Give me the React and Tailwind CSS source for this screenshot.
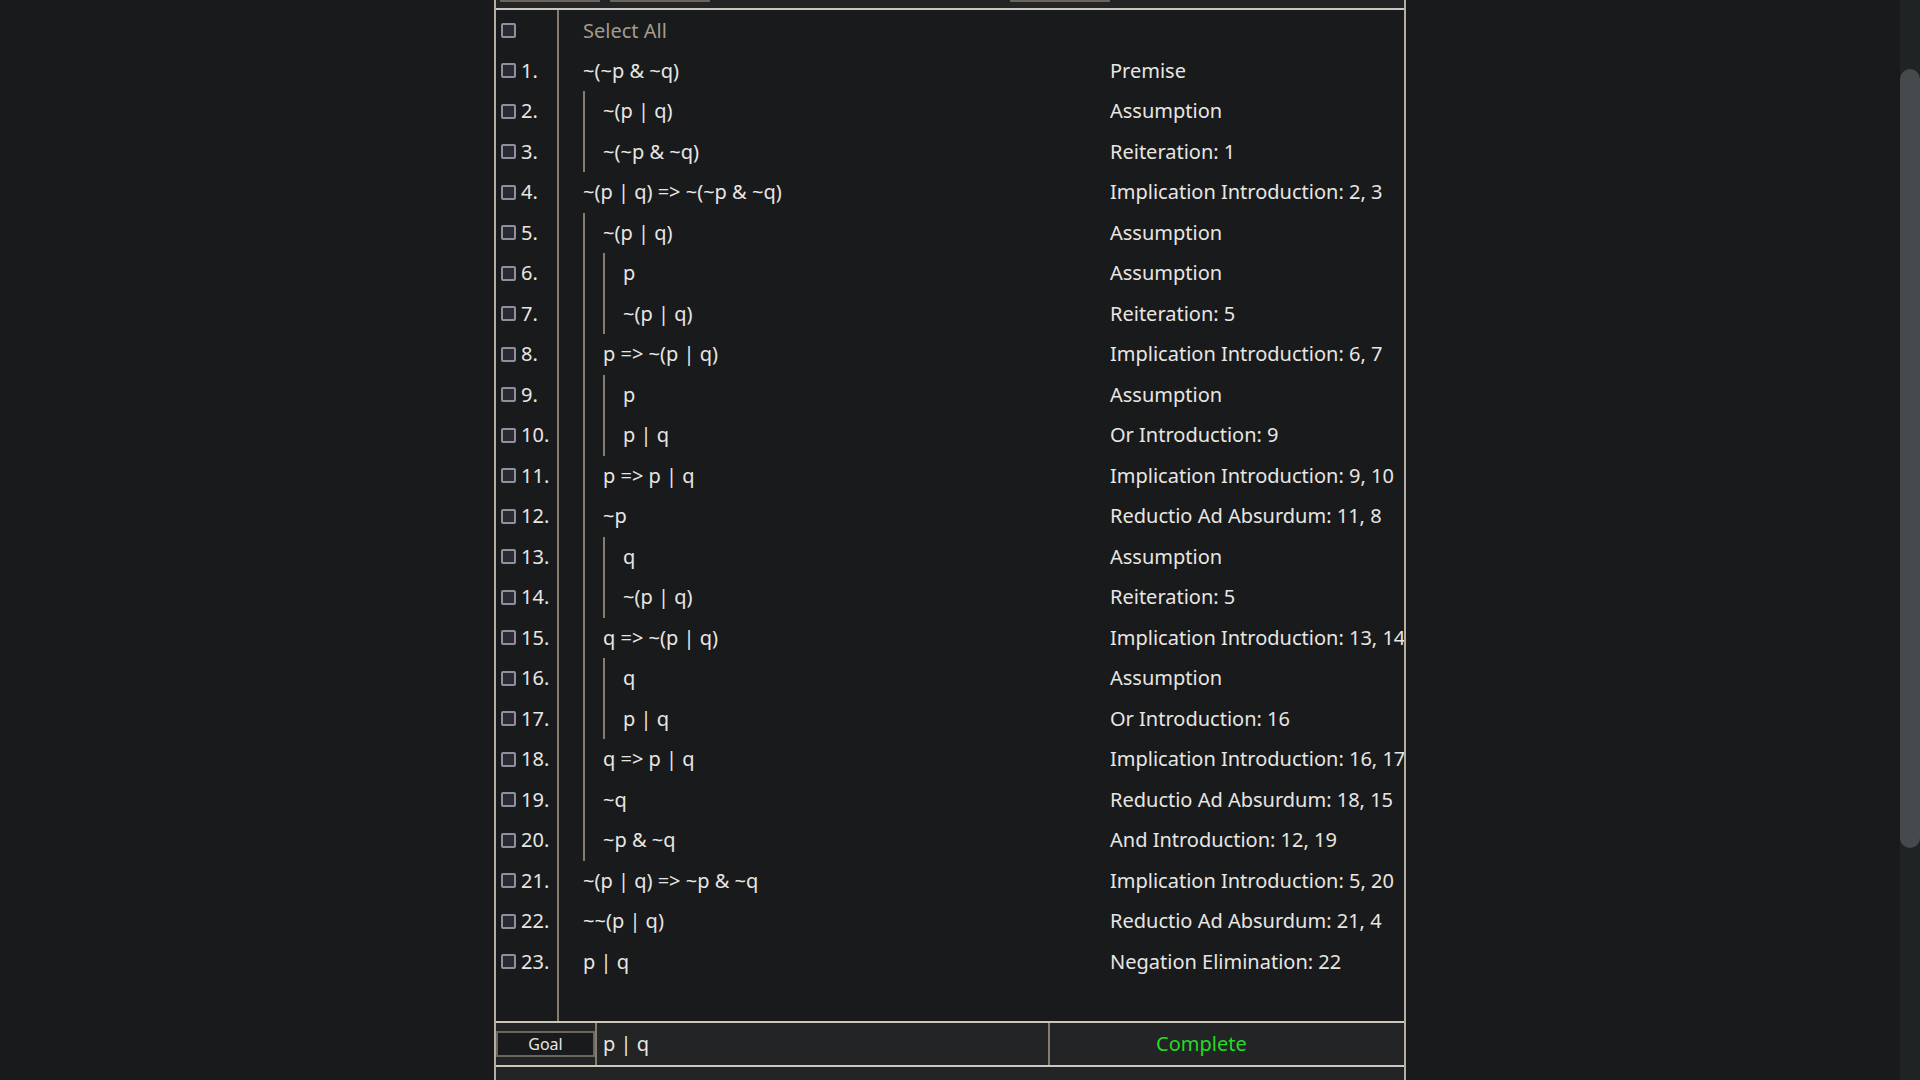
import React from "react";

const lines = [
  { f: "~(~p & ~q)", d: 0, j: "Premise" },
  { f: "~(p | q)", d: 1, j: "Assumption" },
  { f: "~(~p & ~q)", d: 1, j: "Reiteration: 1" },
  { f: "~(p | q) => ~(~p & ~q)", d: 0, j: "Implication Introduction: 2, 3" },
  { f: "~(p | q)", d: 1, j: "Assumption" },
  { f: "p", d: 2, j: "Assumption" },
  { f: "~(p | q)", d: 2, j: "Reiteration: 5" },
  { f: "p => ~(p | q)", d: 1, j: "Implication Introduction: 6, 7" },
  { f: "p", d: 2, j: "Assumption" },
  { f: "p | q", d: 2, j: "Or Introduction: 9" },
  { f: "p => p | q", d: 1, j: "Implication Introduction: 9, 10" },
  { f: "~p", d: 1, j: "Reductio Ad Absurdum: 11, 8" },
  { f: "q", d: 2, j: "Assumption" },
  { f: "~(p | q)", d: 2, j: "Reiteration: 5" },
  { f: "q => ~(p | q)", d: 1, j: "Implication Introduction: 13, 14" },
  { f: "q", d: 2, j: "Assumption" },
  { f: "p | q", d: 2, j: "Or Introduction: 16" },
  { f: "q => p | q", d: 1, j: "Implication Introduction: 16, 17" },
  { f: "~q", d: 1, j: "Reductio Ad Absurdum: 18, 15" },
  { f: "~p & ~q", d: 1, j: "And Introduction: 12, 19" },
  { f: "~(p | q) => ~p & ~q", d: 0, j: "Implication Introduction: 5, 20" },
  { f: "~~(p | q)", d: 0, j: "Reductio Ad Absurdum: 21, 4" },
  { f: "p | q", d: 0, j: "Negation Elimination: 22" },
];

function Box() {
  return (
    <span className="w-[15px] h-[15px] shrink-0 rounded-[2px] border-2 border-[#8f8f9d] bg-[#2b2a33]" />
  );
}

export default function App() {
  return (
    <div
      className="flex h-screen overflow-hidden bg-[#181a1b] text-[#e8e6e3] text-[20px]"
      style={{ fontFamily: '"Noto Sans", "Open Sans", sans-serif' }}
    >
      <div className="flex-1 flex justify-center">
        <div className="w-[912px] h-full flex flex-col border-x-2 border-[#b3ada4]">
          {/* toolbar, mostly scrolled away */}
          <div className="h-[8px] shrink-0 flex items-end overflow-hidden bg-[#222426] pl-[4px]">
            <div className="w-[100px] h-[30px] shrink-0 mb-[6px] border-2 border-[#6b655b]" />
            <div className="w-[100px] h-[30px] shrink-0 mb-[6px] ml-[10px] border-2 border-[#6b655b]" />
            <div className="w-[100px] h-[30px] shrink-0 mb-[6px] ml-[300px] border-2 border-[#6b655b]" />
          </div>
          <div className="h-[2px] shrink-0 bg-[#cbc6be]" />

          {/* proof */}
          <div className="flex-1 flex min-h-0 overflow-hidden">
            <div className="w-[63px] shrink-0 border-r-2 border-[#857d70]">
              <div className="h-[40.5px] flex items-center pl-[5px]">
                <Box />
              </div>
              {lines.map((l, i) => (
                <div key={i} className="h-[40.5px] flex items-center pl-[5px] gap-[5px]">
                  <Box />
                  <span>{i + 1}.</span>
                </div>
              ))}
            </div>
            <div className="flex-1 min-w-0 overflow-hidden">
              <div className="h-[40.5px] flex items-center pl-[24px] pt-[1px] text-[#a39c91]">
                Select All
              </div>
              {lines.map((l, i) => (
                <div key={i} className="h-[40.5px] flex whitespace-nowrap">
                  <div className="w-[551px] shrink-0 flex pl-[24px]">
                    {Array.from({ length: l.d }).map((_, k) => (
                      <span key={k} className="w-[20px] shrink-0 border-l-2 border-[#857d70]" />
                    ))}
                    <span className="self-center">{l.f}</span>
                  </div>
                  <div className="flex items-center">{l.j}</div>
                </div>
              ))}
            </div>
          </div>

          {/* goal bar */}
          <div className="h-[2px] shrink-0 bg-[#cbc6be]" />
          <div className="h-[42px] shrink-0 flex bg-[#222426]">
            <div className="w-[99px] shrink-0 flex items-center">
              <button className="w-[99px] h-[26px] border-2 border-[#6b655b] bg-[#181a1b] text-[16px] text-[#e8e6e3] leading-none">
                Goal
              </button>
            </div>
            <div className="w-[453px] shrink-0 flex items-center pl-[6px] border-l-2 border-[#857d70]">
              p | q
            </div>
            <div className="flex-1 flex items-center pl-[106px] border-l-2 border-[#857d70] text-[#25d925]">
              Complete
            </div>
          </div>
          <div className="h-[2px] shrink-0 bg-[#cbc6be]" />
          <div className="h-[13px] shrink-0 bg-[#222426]" />
        </div>
      </div>

      {/* scrollbar */}
      <div className="w-[20px] shrink-0 bg-[#202324] pt-[69px]">
        <div className="h-[779px] rounded-full bg-[#454a4d]" />
      </div>
    </div>
  );
}
